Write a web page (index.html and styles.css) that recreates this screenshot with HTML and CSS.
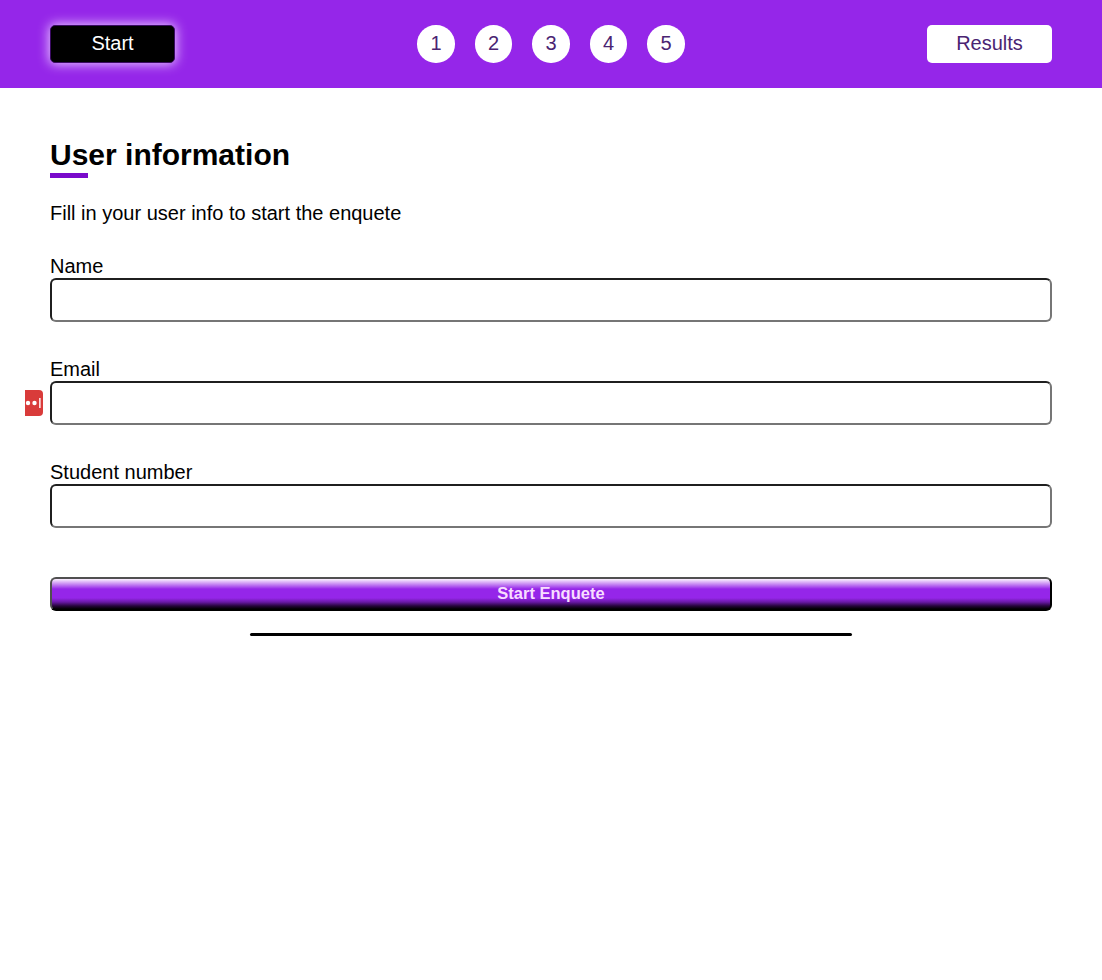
FILE: index.html
```html
<!DOCTYPE html>
<html lang="en">
<head>
<meta charset="utf-8">
<title>Enquete</title>
<link rel="stylesheet" href="styles.css">
</head>
<body>
<nav class="nav">
  <a class="nav-button active">Start</a>
  <div class="steps">
    <a class="step">1</a>
    <a class="step">2</a>
    <a class="step">3</a>
    <a class="step">4</a>
    <a class="step">5</a>
  </div>
  <a class="nav-button">Results</a>
</nav>
<main class="content">
  <h1 class="title">User information</h1>
  <p class="intro">Fill in your user info to start the enquete</p>
  <form class="form">
    <label class="field">Name<input class="input" type="text"></label>
    <label class="field">Email<input class="input" type="text">
      <svg class="badge" width="18" height="26" viewBox="0 0 18 26">
        <path d="M0 0H14Q18 0 18 4V22Q18 26 14 26H0Z" fill="#d93b3a"/>
        <circle cx="3" cy="13" r="2.2" fill="#fff"/>
        <circle cx="9.5" cy="13" r="2.2" fill="#fff"/>
        <rect x="14" y="8" width="1.7" height="10" fill="#fbdcdc"/>
      </svg>
    </label>
    <label class="field">Student number<input class="input" type="text"></label>
    <button class="submit" type="button">Start Enquete</button>
  </form>
  <hr class="rule">
</main>
</body>
</html>
```
FILE: styles.css
```css
* {
  box-sizing: border-box;
}

body {
  margin: 0;
  background: #fff;
  color: #000;
  font: 20px/23px "Liberation Sans", Arial, sans-serif;
}

.nav {
  display: grid;
  grid-template-columns: 1fr auto 1fr;
  align-items: center;
  height: 88px;
  padding: 0 50px;
  background: #9526e9;
}

.nav-button,
.step {
  display: block;
  height: 37.5px;
  background: #fff;
  color: #4a2472;
  line-height: 36px;
  text-align: center;
}

.nav-button {
  width: 125px;
  border-radius: 5px;
}

.nav-button:last-child {
  justify-self: end;
}

.active {
  background: #000;
  color: #fff;
  border: 1px solid #3a0a62;
  line-height: 34px;
  box-shadow: 0 0 12px 1px #e8c8ff;
}

.steps {
  display: flex;
  gap: 20px;
}

.step {
  width: 37.5px;
  border-radius: 50%;
}

.content {
  padding: 49px 50px 0;
}

.title {
  margin: 0;
  font-size: 30px;
  line-height: 36px;
}

.title::after {
  content: "";
  display: block;
  width: 38px;
  height: 5px;
  background: #7a0acb;
}

.intro {
  margin: 24px 0 30px;
}

.form {
  display: flex;
  flex-direction: column;
}

.field {
  position: relative;
  display: flex;
  flex-direction: column;
  margin-bottom: 36px;
}

.input {
  width: 100%;
  height: 44px;
  border: 2px solid;
  border-color: #1f1f1f #767676 #767676 #1f1f1f;
  border-radius: 6px;
  background: #fff;
}

.badge {
  position: absolute;
  left: -25px;
  top: 32px;
}

.submit {
  height: 34px;
  margin-top: 13px;
  padding: 0 0 1px;
  border: 2px solid;
  border-color: #505050 #000 #000 #505050;
  border-radius: 6px;
  background: linear-gradient(#fbf2ff 0, #c98cf3 5px, #9526e9 10px, #9526e9 19px, #6a19a7 23px, #250539 27px, #000 30px);
  color: #f8ddff;
  font: bold 16.5px "Liberation Sans", Arial, sans-serif;
}

.rule {
  width: 602px;
  height: 3px;
  margin: 22px auto 0;
  border: 0;
  border-radius: 2px;
  background: #000;
}
```
